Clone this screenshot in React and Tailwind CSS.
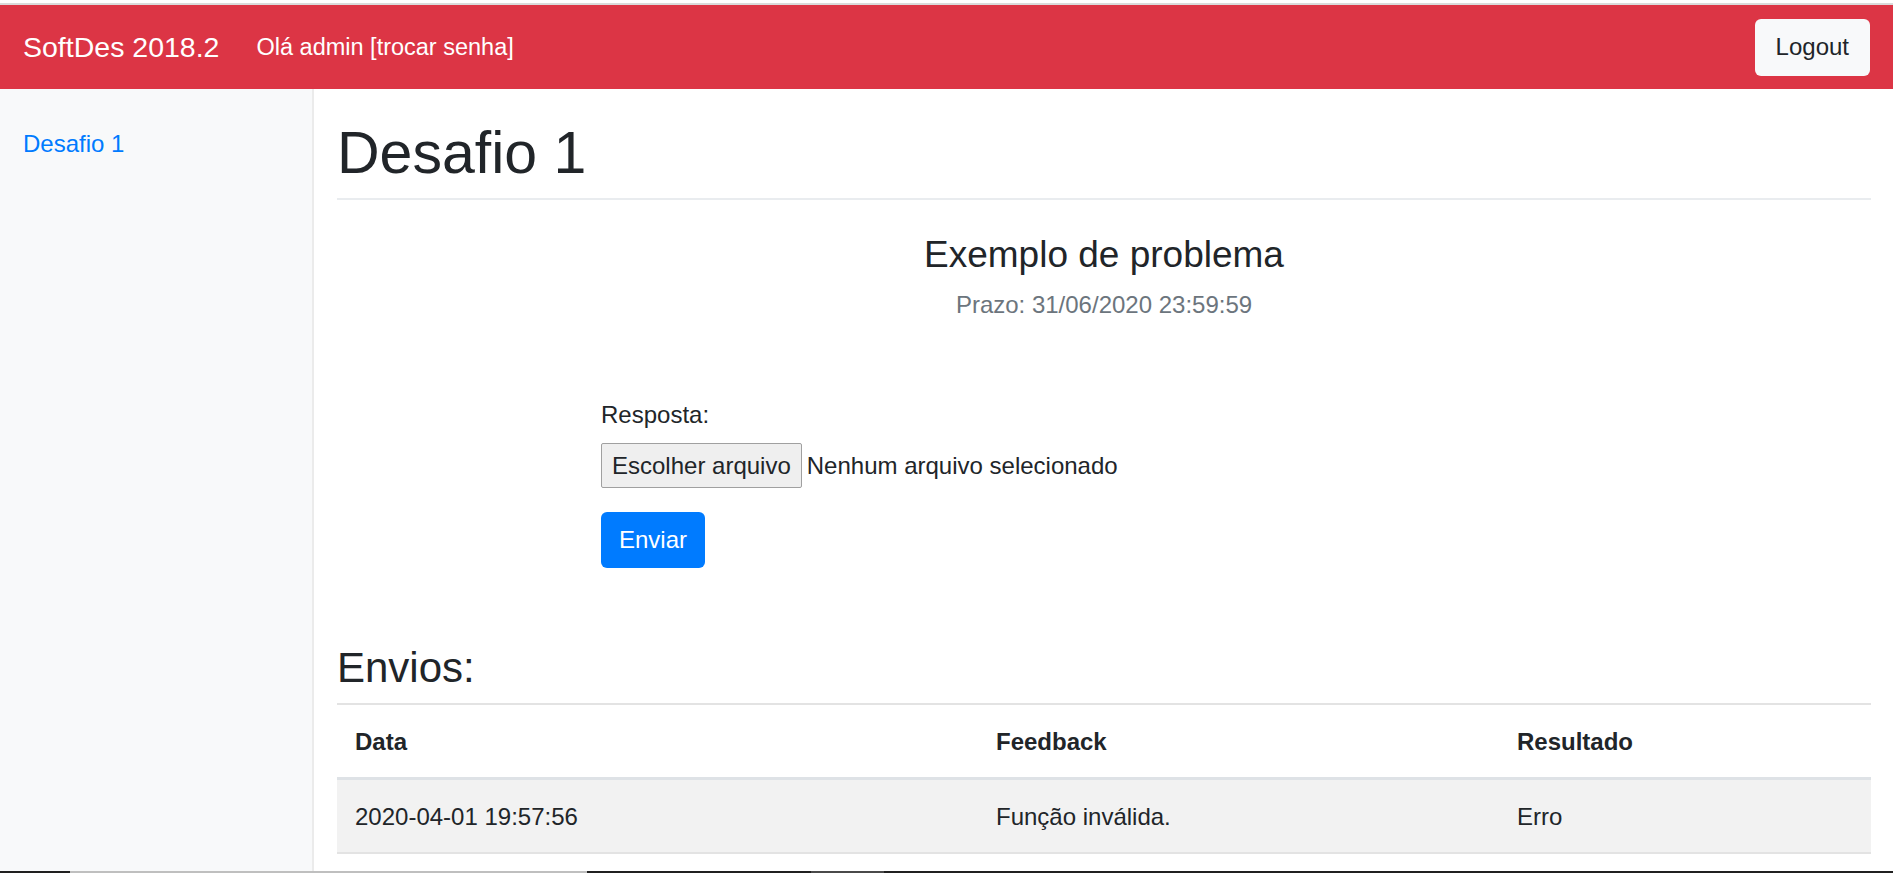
const FONT = { fontFamily: '"Liberation Sans", Arial, sans-serif' }

const SUBMISSIONS = [
  { data: '2020-04-01 19:57:56', feedback: 'Função inválida.', resultado: 'Erro' },
]

function Navbar() {
  return (
    <nav className="h-[84px] bg-[#dc3545] flex items-center pl-[23px] pr-[23px] text-white">
      <a className="text-[28.5px] leading-[45px] mr-[37px]">SoftDes 2018.2</a>
      <span className="text-[23.5px] leading-[36px]">Olá admin [trocar senha]</span>
      <button className="ml-auto h-[57px] px-[21px] rounded-[6px] bg-[#f8f9fa] text-[#212529] text-[24px] leading-[36px]">
        Logout
      </button>
    </nav>
  )
}

function Sidebar() {
  return (
    <aside className="w-[314px] shrink-0 bg-[#f8f9fa] border-r-2 border-[#ebebeb] pt-[37px] pl-[23px]">
      <a className="block text-[24px] leading-[36px] text-[#007bff]">Desafio 1</a>
    </aside>
  )
}

export default function App() {
  return (
    <div style={FONT} className="h-[873px] overflow-hidden flex flex-col bg-white text-[#212529]">
      <div className="h-[3px] bg-white" />
      <div className="h-[2px] bg-[#dadada]" />
      <Navbar />

      <div className="flex flex-1 min-h-0">
        <Sidebar />

        <main className="flex-1 pl-[23px] pr-[22px]">
          {/* Title */}
          <h1 className="mt-[28px] text-[59px] leading-[72px] pb-[9px] border-b-2 border-[#e9ecef]">Desafio 1</h1>

          {/* Problem header */}
          <div className="text-center mt-[33px]">
            <h4 className="text-[37px] leading-[43px]">Exemplo de problema</h4>
            <p className="mt-[11px] text-[24px] leading-[36px] text-[#6c757d]">Prazo: 31/06/2020 23:59:59</p>
          </div>

          {/* Upload form */}
          <form className="ml-[264px] mt-[74px] text-[24px]">
            <label className="block leading-[36px]">Resposta:</label>
            <div className="mt-[10px] flex items-center">
              <span className="h-[45px] flex items-center px-[10px] border border-[#a0a0a0] rounded-[2px] bg-[#efefef] leading-none">
                Escolher arquivo
              </span>
              <span className="ml-[5px] leading-[36px]">Nenhum arquivo selecionado</span>
            </div>
            <button type="button" className="mt-[24px] h-[56px] px-[18px] rounded-[6px] bg-[#007bff] text-white leading-[36px]">
              Enviar
            </button>
          </form>

          {/* Submissions */}
          <h3 className="mt-[75px] text-[42px] leading-[50px]">Envios:</h3>
          <table className="mt-[10px] w-full text-[24px] leading-[36px] border-collapse">
            <thead>
              <tr className="border-t-2 border-[#e3e3e3]">
                <th className="w-[641px] text-left font-bold px-[18px] pt-[19px] pb-[17px] border-b-[3px] border-[#dee2e6]">Data</th>
                <th className="w-[521px] text-left font-bold px-[18px] pt-[19px] pb-[17px] border-b-[3px] border-[#dee2e6]">Feedback</th>
                <th className="text-left font-bold px-[18px] pt-[19px] pb-[17px] border-b-[3px] border-[#dee2e6]">Resultado</th>
              </tr>
            </thead>
            <tbody>
              {SUBMISSIONS.map(s => (
                <tr key={s.data} className="bg-[#f2f2f2] border-b-2 border-[#e3e3e3]">
                  <td className="px-[18px] pt-[19px] pb-[17px]">{s.data}</td>
                  <td className="px-[18px] pt-[19px] pb-[17px]">{s.feedback}</td>
                  <td className="px-[18px] pt-[19px] pb-[17px]">{s.resultado}</td>
                </tr>
              ))}
            </tbody>
          </table>
        </main>
      </div>

      {/* taskbar edge */}
      <div className="h-[2px] flex shrink-0">
        <div className="w-[70px] bg-[#202020]" />
        <div className="w-[517px] bg-[#bfbfbf]" />
        <div className="w-[224px] bg-[#202020]" />
        <div className="w-[73px] bg-[#4a4a4a]" />
        <div className="flex-1 bg-[#202020]" />
      </div>
    </div>
  )
}
